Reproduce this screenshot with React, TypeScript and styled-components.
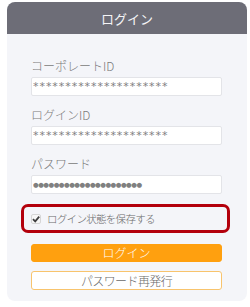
import React from 'react';
import styled, { createGlobalStyle } from 'styled-components';

const GlobalStyle = createGlobalStyle`
  html, body {
    margin: 0;
    padding: 0;
    background: #fff;
  }
  body {
    font-family: "Noto Sans CJK JP", "Noto Sans", sans-serif;
  }
`;

const Card = styled.div`
  margin: 2px 0 0 7px;
  width: 240px;
  border-radius: 8px;
  overflow: hidden;
  background: #f4f5f9;
`;

const Header = styled.div`
  height: 32px;
  background: #6d6d77;
  color: #f4f4f6;
  font-size: 13px;
  display: flex;
  align-items: center;
  justify-content: center;
`;

const Body = styled.div`
  padding: 23px 25px 11px 24px;
  display: flex;
  flex-direction: column;
`;

const Field = styled.div`
  display: flex;
  flex-direction: column;
  gap: 2px;
  margin-bottom: 10px;
`;

const Label = styled.label`
  font-size: 12px;
  font-weight: 300;
  line-height: 18px;
  color: #7a7a7a;
`;

const Input = styled.input<{ $dots?: boolean }>`
  box-sizing: border-box;
  height: 19px;
  width: 191px;
  margin: 0;
  padding: 0 0 0 1px;
  border: 1px solid #e3e4e8;
  border-radius: 2px;
  background: #fff;
  font-family: "DejaVu Sans", sans-serif;
  font-size: ${p => (p.$dots ? '6.5px' : '11px')};
  letter-spacing: ${p => (p.$dots ? '-0.5px' : '0.95px')};
  color: #808080;
  outline: none;
`;

const Remember = styled.label`
  box-sizing: border-box;
  height: 29px;
  margin: 0 -8px 11px -10px;
  border: 3px solid #b3000c;
  border-radius: 7px;
  display: flex;
  align-items: center;
  gap: 6px;
  padding-left: 7px;
  font-size: 10.5px;
  font-weight: 300;
  letter-spacing: -0.7px;
  color: #6a6a6a;
`;

const CheckBox = styled.span`
  box-sizing: border-box;
  width: 10px;
  height: 10px;
  border: 1px solid #d6d6d6;
  border-radius: 2px;
  background: #f7f7f7;
  display: flex;
  align-items: center;
  justify-content: center;
`;

const Button = styled.button<{ $primary?: boolean }>`
  box-sizing: border-box;
  width: 191px;
  height: ${p => (p.$primary ? '18px' : '19px')};
  margin: 0 0 ${p => (p.$primary ? '9px' : '0')};
  padding: 0;
  border-radius: 3px;
  border: 1px solid ${p => (p.$primary ? '#ffa00f' : '#f8c46d')};
  background: ${p => (p.$primary ? '#ffa00f' : '#fff')};
  color: ${p => (p.$primary ? '#fff' : '#6a6a6a')};
  font-family: "Noto Sans CJK JP", sans-serif;
  font-size: 12px;
  font-weight: 300;
  letter-spacing: ${p => (p.$primary ? '0' : '-0.6px')};
  line-height: 16px;
`;

export default function App() {
  return (
    <>
      <GlobalStyle />
      <Card>
        <Header>ログイン</Header>
        <Body>
          <Field>
            <Label>コーポレートID</Label>
            <Input readOnly value="*********************" />
          </Field>
          <Field>
            <Label>ログインID</Label>
            <Input readOnly value="*********************" />
          </Field>
          <Field>
            <Label>パスワード</Label>
            <Input $dots readOnly value="●●●●●●●●●●●●●●●●●●●●●" />
          </Field>
          <Remember>
            <CheckBox>
              <svg width="8" height="8" viewBox="0 0 10 10">
                <path d="M1.2 5.2 L4 8 L9 2" fill="none" stroke="#3f3f3f" strokeWidth="2.2" />
              </svg>
            </CheckBox>
            ログイン状態を保存する
          </Remember>
          <Button $primary>ログイン</Button>
          <Button>パスワード再発行</Button>
        </Body>
      </Card>
    </>
  );
}
